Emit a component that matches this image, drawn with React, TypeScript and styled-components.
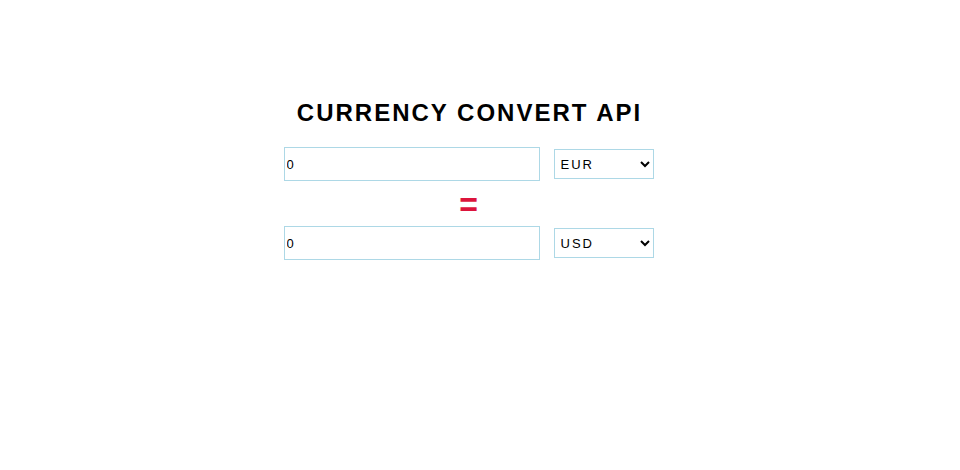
import React from "react";
import styled, { createGlobalStyle } from "styled-components";

const GlobalStyle = createGlobalStyle`
  html, body { margin: 0; padding: 0; background: #ffffff; }
  body { font-family: "Liberation Sans", Arial, sans-serif; }
`;

const Page = styled.div`
  width: 937px;
  display: flex;
  flex-direction: column;
  align-items: center;
  padding-top: 99px;
`;

const Title = styled.h1`
  margin: 0;
  font-family: "Liberation Sans", Arial, sans-serif;
  font-size: 24px;
  line-height: 28px;
  font-weight: 700;
  letter-spacing: 2px;
  color: #000000;
  padding-left: 2px;
`;

const Row = styled.div<{ $top: number }>`
  display: flex;
  align-items: center;
  gap: 14px;
  margin-top: ${(p) => p.$top}px;
`;

const AmountInput = styled.input`
  box-sizing: border-box;
  width: 256px;
  height: 34px;
  padding: 0 2px;
  border: 1px solid #add8e6;
  outline: none;
  font-family: "Liberation Sans", Arial, sans-serif;
  font-size: 13px;
  color: #000;
  background: #fff;
`;

const CurrencySelect = styled.select`
  box-sizing: border-box;
  width: 100px;
  height: 30px;
  padding: 0 2px;
  border: 1px solid #add8e6;
  border-radius: 0;
  outline: none;
  font-family: "Liberation Sans", Arial, sans-serif;
  font-size: 13px;
  letter-spacing: 2px;
  color: #000;
  background: #fff;
`;

const Equals = styled.div`
  margin-top: 11px;
  height: 34px;
  font-family: "Liberation Sans", Arial, sans-serif;
  font-size: 32px;
  font-weight: 700;
  line-height: 26px;
  color: #dc143c;
  transform: scaleY(1.1);
  transform-origin: 50% 50%;
`;

export default function App() {
  return (
    <>
      <GlobalStyle />
      <Page>
        <Title>CURRENCY CONVERT API</Title>
        <Row $top={20}>
          <AmountInput type="text" defaultValue="0" />
          <CurrencySelect defaultValue="EUR">
            <option value="EUR">EUR</option>
            <option value="USD">USD</option>
          </CurrencySelect>
        </Row>
        <Equals>=</Equals>
        <Row $top={0}>
          <AmountInput type="text" defaultValue="0" />
          <CurrencySelect defaultValue="USD">
            <option value="EUR">EUR</option>
            <option value="USD">USD</option>
          </CurrencySelect>
        </Row>
      </Page>
    </>
  );
}
